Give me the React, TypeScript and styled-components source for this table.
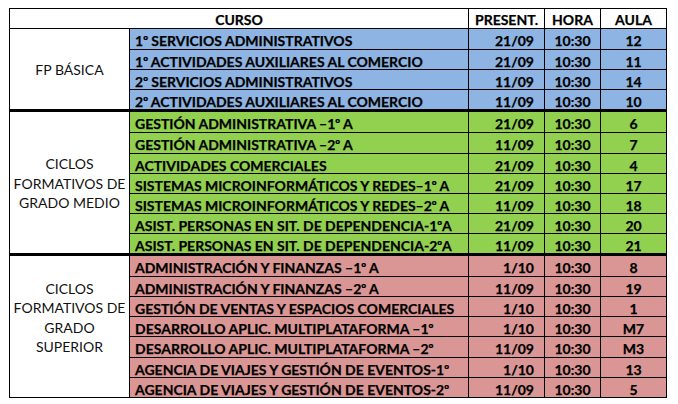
import React from "react";
import styled, { createGlobalStyle } from "styled-components";

type Tone = "blue" | "green" | "red";

interface Course {
  name: string;
  date: string;
  hour: string;
  room: string;
}

interface Group {
  label: string[];
  tone: Tone;
  courses: Course[];
}

const toneColors: Record<Tone, string> = {
  blue: "#8db4e2",
  green: "#92d050",
  red: "#da9694",
};

const groups: Group[] = [
  {
    label: ["FP BÁSICA"],
    tone: "blue",
    courses: [
      { name: "1º SERVICIOS ADMINISTRATIVOS", date: "21/09", hour: "10:30", room: "12" },
      { name: "1º ACTIVIDADES AUXILIARES AL COMERCIO", date: "21/09", hour: "10:30", room: "11" },
      { name: "2º SERVICIOS ADMINISTRATIVOS", date: "11/09", hour: "10:30", room: "14" },
      { name: "2º ACTIVIDADES AUXILIARES AL COMERCIO", date: "11/09", hour: "10:30", room: "10" },
    ],
  },
  {
    label: ["CICLOS", "FORMATIVOS DE", "GRADO MEDIO"],
    tone: "green",
    courses: [
      { name: "GESTIÓN ADMINISTRATIVA –1º A", date: "21/09", hour: "10:30", room: "6" },
      { name: "GESTIÓN ADMINISTRATIVA –2º A", date: "11/09", hour: "10:30", room: "7" },
      { name: "ACTIVIDADES COMERCIALES", date: "21/09", hour: "10:30", room: "4" },
      { name: "SISTEMAS MICROINFORMÁTICOS Y REDES–1º A", date: "21/09", hour: "10:30", room: "17" },
      { name: "SISTEMAS MICROINFORMÁTICOS Y REDES–2º A", date: "11/09", hour: "10:30", room: "18" },
      { name: "ASIST. PERSONAS EN SIT. DE DEPENDENCIA-1ºA", date: "21/09", hour: "10:30", room: "20" },
      { name: "ASIST. PERSONAS EN SIT. DE DEPENDENCIA-2ºA", date: "11/09", hour: "10:30", room: "21" },
    ],
  },
  {
    label: ["CICLOS", "FORMATIVOS DE", "GRADO", "SUPERIOR"],
    tone: "red",
    courses: [
      { name: "ADMINISTRACIÓN Y FINANZAS –1º A", date: "1/10", hour: "10:30", room: "8" },
      { name: "ADMINISTRACIÓN Y FINANZAS –2º A", date: "11/09", hour: "10:30", room: "19" },
      { name: "GESTIÓN DE VENTAS Y ESPACIOS COMERCIALES", date: "1/10", hour: "10:30", room: "1" },
      { name: "DESARROLLO APLIC. MULTIPLATAFORMA –1º", date: "1/10", hour: "10:30", room: "M7" },
      { name: "DESARROLLO APLIC. MULTIPLATAFORMA –2º", date: "11/09", hour: "10:30", room: "M3" },
      { name: "AGENCIA DE VIAJES Y GESTIÓN DE EVENTOS-1º", date: "1/10", hour: "10:30", room: "13" },
      { name: "AGENCIA DE VIAJES Y GESTIÓN DE EVENTOS-2º", date: "11/09", hour: "10:30", room: "5" },
    ],
  },
];

// the "º" in Lato looks like a degree sign, so it gets a font with the underlined ordinal
const renderName = (name: string) =>
  name.split("º").map((part, i) => (
    <React.Fragment key={i}>
      {i > 0 && <Ordinal>º</Ordinal>}
      {part}
    </React.Fragment>
  ));

const App = () => {
  return (
    <>
      <GlobalStyle />
      <Sheet>
        <HeaderRow>
          <HeadCell>CURSO</HeadCell>
          <HeadCell>PRESENT.</HeadCell>
          <HeadCell>HORA</HeadCell>
          <HeadCell $last>AULA</HeadCell>
        </HeaderRow>
        {groups.map((group, gi) => (
          <Section key={gi} $thick={gi > 0}>
            <GroupLabel $lift={group.label.length > 3}>
              {group.label.map((line) => (
                <span key={line}>{line}</span>
              ))}
            </GroupLabel>
            <Rows>
              {group.courses.map((course, ci) => (
                <Row key={ci} $tone={group.tone} $first={ci === 0}>
                  <NameCell>{renderName(course.name)}</NameCell>
                  <DateCell>{course.date}</DateCell>
                  <CenterCell>{course.hour}</CenterCell>
                  <CenterCell $last>{course.room}</CenterCell>
                </Row>
              ))}
            </Rows>
          </Section>
        ))}
      </Sheet>
    </>
  );
};

export default App;

const GlobalStyle = createGlobalStyle`
  html, body {
    margin: 0;
    padding: 0;
    background: #ffffff;
  }
  body {
    font-family: Lato, "Liberation Sans", sans-serif;
    color: #000;
  }
  * {
    box-sizing: border-box;
  }
`;

const Sheet = styled.div`
  margin: 8px 0 0 9px;
  width: 658px;
  border: 1px solid #000;
  display: flex;
  flex-direction: column;
`;

const HeaderRow = styled.div`
  display: grid;
  grid-template-columns: 459px 76px 56px 65px;
  height: 19px;
`;

const HeadCell = styled.div<{ $last?: boolean }>`
  display: flex;
  align-items: center;
  justify-content: center;
  font-size: 14px;
  font-weight: 700;
  -webkit-text-stroke: 0.25px #000;
  padding-top: 2px;
  border-right: ${(p) => (p.$last ? "none" : "1px solid #000")};
`;

const Section = styled.div<{ $thick: boolean }>`
  display: flex;
  border-top: ${(p) => (p.$thick ? "3px" : "1px")} solid #000;
`;

const GroupLabel = styled.div<{ $lift?: boolean }>`
  width: 120px;
  flex-shrink: 0;
  border-right: 1px solid #000;
  display: flex;
  flex-direction: column;
  align-items: center;
  justify-content: center;
  font-size: 14px;
  line-height: 19.5px;
  padding-top: 2px;
  padding-bottom: ${(p) => (p.$lift ? "19px" : "0")};
  color: #111;

  span {
    height: 19.5px;
  }
`;

const Rows = styled.div`
  flex: 1;
  display: flex;
  flex-direction: column;
`;

const Row = styled.div<{ $tone: Tone; $first: boolean }>`
  display: grid;
  grid-template-columns: 339px 76px 56px 65px;
  height: 20.1px;
  background: ${(p) => toneColors[p.$tone]};
  border-top: ${(p) => (p.$first ? "none" : "1px solid #000")};
  font-size: 14px;
  font-weight: 700;
  -webkit-text-stroke: 0.25px #000;
`;

const Cell = styled.div<{ $last?: boolean }>`
  display: flex;
  align-items: center;
  padding-top: 3px;
  white-space: pre;
  border-right: ${(p) => (p.$last ? "none" : "1px solid #000")};
`;

const NameCell = styled(Cell)`
  padding-left: 5px;
`;

const Ordinal = styled.span`
  font-family: "Liberation Sans", sans-serif;
  font-size: 13px;
`;

const DateCell = styled(Cell)`
  justify-content: flex-end;
  padding-right: 10px;
`;

const CenterCell = styled(Cell)`
  justify-content: center;
`;
